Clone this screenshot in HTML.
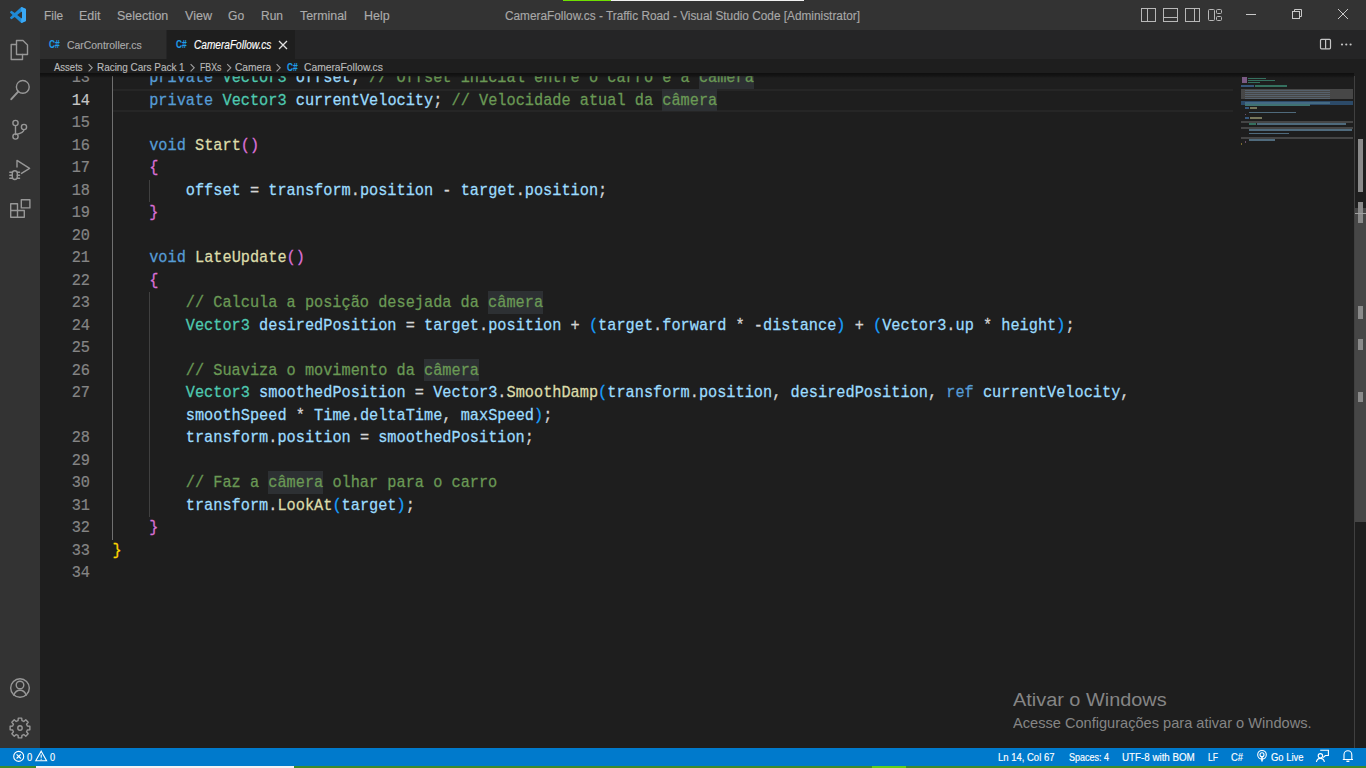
<!DOCTYPE html>
<html><head><meta charset="utf-8">
<style>
*{margin:0;padding:0;box-sizing:border-box}
html,body{width:1366px;height:768px;overflow:hidden;background:#1e1e1e;font-family:"Liberation Sans",sans-serif}
.abs{position:absolute}
.tx{position:absolute;white-space:pre;line-height:1;transform-origin:0 0;-webkit-text-stroke:0.15px currentColor}
svg{position:absolute;overflow:visible}
.ln{position:absolute;left:0;width:50px;text-align:right;font-family:"Liberation Mono",monospace;font-size:15.275px;line-height:22.5px;color:#858585;white-space:pre;transform:scaleY(1.1);transform-origin:0 15.3px;-webkit-text-stroke:0.2px currentColor}
.code{position:absolute;left:72.5px;font-family:"Liberation Mono",monospace;font-size:15.275px;line-height:22.5px;color:#d4d4d4;white-space:pre;transform:scaleY(1.08);transform-origin:0 15.3px;-webkit-text-stroke:0.25px currentColor}
.k{color:#569cd6}.t{color:#4ec9b0}.v{color:#9cdcfe}.f{color:#dcdcaa}.c{color:#6a9955}
.b1{color:#ffd700}.b2{color:#da70d6}.b3{color:#179fff}
.hl{background:#343a40}
</style></head><body>

<div class="abs" style="left:0;top:0;width:1366px;height:30px;background:#333333"></div>
<div class="abs" style="left:563px;top:0;width:48px;height:1px;background:#6fe000"></div>
<div class="abs" style="left:611px;top:0;width:193px;height:1px;background:#f0f0f0"></div>
<svg style="left:10px;top:7px" width="16" height="16" viewBox="0 0 100 100"><defs><clipPath id="lc"><rect x="70" y="0" width="30" height="100"/></clipPath></defs><path fill="#1f8ad6" d="M96.46 10.8L75.86.87a6.23 6.23 0 0 0-7.1 1.2L29.33 38.06 12.15 25a4.16 4.16 0 0 0-5.32.24L1.33 30.25a4.17 4.17 0 0 0 0 6.16L16.230 50 1.33 63.59a4.17 4.17 0 0 0 0 6.16l5.5 5a4.16 4.16 0 0 0 5.32.24l17.18-13.06 39.43 36a6.2 6.2 0 0 0 7.1 1.2l20.6-9.91A6.25 6.25 0 0 0 100 83.6V16.4a6.25 6.25 0 0 0-3.54-5.6zM75 72.7L45.08 50 75 27.3z"/><path fill="#3aa9f6" clip-path="url(#lc)" d="M96.46 10.8L75.86.87a6.23 6.23 0 0 0-7.1 1.2L29.33 38.06 12.15 25a4.16 4.16 0 0 0-5.32.24L1.33 30.25a4.17 4.17 0 0 0 0 6.16L16.230 50 1.33 63.59a4.17 4.17 0 0 0 0 6.16l5.5 5a4.16 4.16 0 0 0 5.32.24l17.18-13.06 39.43 36a6.2 6.2 0 0 0 7.1 1.2l20.6-9.91A6.25 6.25 0 0 0 100 83.6V16.4a6.25 6.25 0 0 0-3.54-5.6zM75 72.7L45.08 50 75 27.3z"/></svg>
<div class="tx" style="left:43.50px;top:9.92px;font-size:12.85px;color:#ababab;transform:scaleX(0.9233);">File</div>
<div class="tx" style="left:78.90px;top:9.92px;font-size:12.85px;color:#ababab;transform:scaleX(0.9700);">Edit</div>
<div class="tx" style="left:116.50px;top:9.92px;font-size:12.85px;color:#ababab;transform:scaleX(0.9702);">Selection</div>
<div class="tx" style="left:184.60px;top:9.92px;font-size:12.85px;color:#ababab;transform:scaleX(0.9810);">View</div>
<div class="tx" style="left:228.00px;top:9.92px;font-size:12.85px;color:#ababab;transform:scaleX(0.9444);">Go</div>
<div class="tx" style="left:261.00px;top:9.92px;font-size:12.85px;color:#ababab;transform:scaleX(0.9331);">Run</div>
<div class="tx" style="left:299.80px;top:9.92px;font-size:12.85px;color:#ababab;transform:scaleX(0.9636);">Terminal</div>
<div class="tx" style="left:364.20px;top:9.92px;font-size:12.85px;color:#ababab;transform:scaleX(0.9695);">Help</div>
<div class="tx" style="left:505.40px;top:9.92px;font-size:12.85px;color:#a8a8a8;transform:scaleX(0.9203);">CameraFollow.cs - Traffic Road - Visual Studio Code [Administrator]</div>
<svg style="left:0;top:0" width="1366" height="30"><g fill="none" stroke="#b8b8b8" stroke-width="1"><rect x="1141.5" y="8.5" width="14" height="13"/><line x1="1147.5" y1="8.5" x2="1147.5" y2="21.5"/><rect x="1163.5" y="8.5" width="14" height="13"/><line x1="1163.5" y1="17.5" x2="1177.5" y2="17.5"/><rect x="1185.5" y="8.5" width="14" height="13"/><line x1="1194.5" y1="8.5" x2="1194.5" y2="21.5"/><rect x="1208.5" y="9.5" width="6" height="11" rx="1"/><rect x="1216.5" y="9.5" width="5" height="4" rx="1"/><rect x="1216.5" y="16.5" width="5" height="4" rx="1"/></g><g fill="none" stroke="#c8c8c8" stroke-width="1"><line x1="1246" y1="14.5" x2="1256" y2="14.5"/><rect x="1292.5" y="11.5" width="7" height="7"/><path d="M1294.5 11.5V9.5h7v7h-2"/><path d="M1338 9L1348 19M1348 9L1338 19"/></g></svg>
<div class="abs" style="left:0;top:30px;width:40px;height:718px;background:#333333"></div>
<svg style="left:0;top:30px" width="40" height="718"><g fill="none" stroke="#979797" stroke-width="1.4" stroke-linejoin="round" stroke-linecap="round"><path d="M16.5 10.5h6.5l4.5 4.5v9.5h-11z"/><path d="M16.5 14.5h-5.3v15h11.3v-5"/><circle cx="22.8" cy="56.9" r="6.4"/><path d="M18.2 61.6L11.3 69.2" stroke-width="2"/><circle cx="15.5" cy="93" r="2.6"/><circle cx="24" cy="97" r="2.6"/><circle cx="15.5" cy="106.5" r="2.6"/><path d="M15.5 95.6v8.3M24 99.6c0 3-3 4-8.5 5"/><path d="M17 137V130.4L29.6 138.4L21.5 143.4"/><path d="M12.3 143.2c0-1.6 1.1-2.4 2.5-2.4s2.5.8 2.5 2.4v3.6c0 1.7-1.1 2.7-2.5 2.7s-2.5-1-2.5-2.7z"/><path d="M9.8 142.2h2.5M17.3 142.2h2.3M9.8 145.2h2.5M17.3 145.2h2.3M9.8 148.2h2.5M17.3 148.2h2.3"/><path d="M10.7 173.7h6.8v6.8h-6.8z M10.7 180.5h6.8v6.8h-6.8z M17.5 180.5h6.8v6.8h-6.8z"/><rect x="21.3" y="169.7" width="8.6" height="8.2"/><circle cx="20" cy="658" r="9.3"/><circle cx="20" cy="655" r="3.8"/><path d="M13.8 665.2c1.2-3.5 3.5-5 6.2-5s5 1.5 6.2 5"/></g><g transform="translate(20,698)" fill="none" stroke="#979797" stroke-width="1.4" stroke-linejoin="round"><path d="M-1.95,-7.34 L-1.69,-9.86 L1.69,-9.86 L1.95,-7.34 L3.81,-6.57 L5.77,-8.17 L8.17,-5.77 L6.57,-3.81 L7.34,-1.95 L9.86,-1.69 L9.86,1.69 L7.34,1.95 L6.57,3.81 L8.17,5.77 L5.77,8.17 L3.81,6.57 L1.95,7.34 L1.69,9.86 L-1.69,9.86 L-1.95,7.34 L-3.81,6.57 L-5.77,8.17 L-8.17,5.77 L-6.57,3.81 L-7.34,1.95 L-9.86,1.69 L-9.86,-1.69 L-7.34,-1.95 L-6.57,-3.81 L-8.17,-5.77 L-5.77,-8.17 L-3.81,-6.57 Z"/><circle cx="0" cy="0" r="2.2"/></g></svg>
<div class="abs" style="left:40px;top:30px;width:1326px;height:29px;background:#252526"></div>
<div class="abs" style="left:40px;top:30px;width:126px;height:29px;background:#2d2d2d"></div>
<div class="abs" style="left:167px;top:30px;width:128px;height:29px;background:#1e1e1e"></div>
<div class="tx" style="left:49.00px;top:39.95px;font-size:10.34px;color:#1f9de8;font-weight:bold;transform:scaleX(0.8013);">C#</div>
<div class="tx" style="left:67.30px;top:39.47px;font-size:11.73px;color:#ababab;transform:scaleX(0.8892);">CarController.cs</div>
<div class="tx" style="left:175.90px;top:39.95px;font-size:10.34px;color:#1f9de8;font-weight:bold;transform:scaleX(0.8013);">C#</div>
<div class="tx" style="left:194.00px;top:39.13px;font-size:12.01px;color:#ffffff;font-style:italic;transform:scaleX(0.8412);">CameraFollow.cs</div>
<svg style="left:0;top:0" width="1366" height="60"><g fill="none" stroke="#e0e0e0" stroke-width="1.3"><path d="M279 41L287 49M287 41L279 49"/></g><g fill="none" stroke="#c5c5c5" stroke-width="1.2"><rect x="1320.5" y="39.4" width="10" height="9.4" rx="1"/><line x1="1325.6" y1="39.4" x2="1325.6" y2="48.8"/></g><g fill="#c5c5c5"><circle cx="1342" cy="44.5" r="1.1"/><circle cx="1346.3" cy="44.5" r="1.1"/><circle cx="1350.6" cy="44.5" r="1.1"/></g></svg>
<div class="abs" style="left:40px;top:59px;width:1326px;height:17px;background:#1e1e1e"></div>
<div class="tx" style="left:54.20px;top:62.41px;font-size:11.45px;color:#bababa;transform:scaleX(0.8324);">Assets</div>
<div class="tx" style="left:97.20px;top:62.41px;font-size:11.45px;color:#bababa;transform:scaleX(0.8667);">Racing Cars Pack 1</div>
<div class="tx" style="left:199.80px;top:62.41px;font-size:11.45px;color:#bababa;transform:scaleX(0.7642);">FBXs</div>
<div class="tx" style="left:235.00px;top:62.41px;font-size:11.45px;color:#bababa;transform:scaleX(0.8903);">Camera</div>
<div class="tx" style="left:303.60px;top:62.41px;font-size:11.45px;color:#bababa;transform:scaleX(0.8994);">CameraFollow.cs</div>
<svg style="left:0;top:59px" width="400" height="17"><g fill="none" stroke="#a0a0a0" stroke-width="1.1"><path d="M88.6 5.2l3.6 3.6-3.6 3.6"/><path d="M190.6 5.2l3.6 3.6-3.6 3.6"/><path d="M227.2 5.2l3.6 3.6-3.6 3.6"/><path d="M276.6 5.2l3.6 3.6-3.6 3.6"/></g></svg>
<div class="tx" style="left:286.60px;top:63.15px;font-size:10.34px;color:#1f9de8;font-weight:bold;transform:scaleX(0.8013);">C#</div>
<div class="abs" style="left:40px;top:76px;width:1326px;height:672px;background:#1e1e1e;overflow:hidden">
<div class="abs" style="left:73px;top:12.5px;width:1120px;height:23px;border-top:2px solid #262626;border-bottom:2px solid #262626"></div>
<div class="abs" style="left:72px;top:0;width:1px;height:463.5px;background:#707070"></div>
<div class="abs" style="left:108.6px;top:103.5px;width:1px;height:22.5px;background:#404040"></div>
<div class="abs" style="left:108.6px;top:216.0px;width:1px;height:225.0px;background:#404040"></div>
<div class="abs" style="left:659.06px;top:-10.0px;width:54.99px;height:22.5px;background:#2d3033"></div>
<div class="ln" style="top:-9.0px;color:#858585">13</div>
<div class="code" style="top:-9.0px">    <span class="k">private</span> <span class="t">Vector3</span> <span class="v">offset</span>; <span class="c">// Offset inicial entre o carro e a </span><span class="c">câmera</span></div>
<div class="abs" style="left:622.40px;top:12.5px;width:54.99px;height:22.5px;background:#2d3033"></div>
<div class="ln" style="top:13.5px;color:#c6c6c6">14</div>
<div class="code" style="top:13.5px">    <span class="k">private</span> <span class="t">Vector3</span> <span class="v">currentVelocity</span>; <span class="c">// Velocidade atual da </span><span class="c">câmera</span></div>
<div class="ln" style="top:36.0px;color:#858585">15</div>
<div class="ln" style="top:58.5px;color:#858585">16</div>
<div class="code" style="top:58.5px">    <span class="k">void</span> <span class="f">Start</span><span class="b2">()</span></div>
<div class="ln" style="top:81.0px;color:#858585">17</div>
<div class="code" style="top:81.0px">    <span class="b2">{</span></div>
<div class="ln" style="top:103.5px;color:#858585">18</div>
<div class="code" style="top:103.5px">        <span class="v">offset</span> = <span class="v">transform</span>.<span class="v">position</span> - <span class="v">target</span>.<span class="v">position</span>;</div>
<div class="ln" style="top:126.0px;color:#858585">19</div>
<div class="code" style="top:126.0px">    <span class="b2">}</span></div>
<div class="ln" style="top:148.5px;color:#858585">20</div>
<div class="ln" style="top:171.0px;color:#858585">21</div>
<div class="code" style="top:171.0px">    <span class="k">void</span> <span class="f">LateUpdate</span><span class="b2">()</span></div>
<div class="ln" style="top:193.5px;color:#858585">22</div>
<div class="code" style="top:193.5px">    <span class="b2">{</span></div>
<div class="abs" style="left:448.26px;top:215.0px;width:54.99px;height:22.5px;background:#2d3033"></div>
<div class="ln" style="top:216.0px;color:#858585">23</div>
<div class="code" style="top:216.0px">        <span class="c">// Calcula a posição desejada da </span><span class="c">câmera</span></div>
<div class="ln" style="top:238.5px;color:#858585">24</div>
<div class="code" style="top:238.5px">        <span class="t">Vector3</span> <span class="v">desiredPosition</span> = <span class="v">target</span>.<span class="v">position</span> + <span class="b3">(</span><span class="v">target</span>.<span class="v">forward</span> * -<span class="v">distance</span><span class="b3">)</span> + <span class="b3">(</span><span class="v">Vector3</span>.<span class="v">up</span> * <span class="v">height</span><span class="b3">)</span>;</div>
<div class="ln" style="top:261.0px;color:#858585">25</div>
<div class="abs" style="left:384.11px;top:282.5px;width:54.99px;height:22.5px;background:#2d3033"></div>
<div class="ln" style="top:283.5px;color:#858585">26</div>
<div class="code" style="top:283.5px">        <span class="c">// Suaviza o movimento da </span><span class="c">câmera</span></div>
<div class="ln" style="top:306.0px;color:#858585">27</div>
<div class="code" style="top:306.0px">        <span class="t">Vector3</span> <span class="v">smoothedPosition</span> = <span class="v">Vector3</span>.<span class="f">SmoothDamp</span><span class="b3">(</span><span class="v">transform</span>.<span class="v">position</span>, <span class="v">desiredPosition</span>, <span class="k">ref</span> <span class="v">currentVelocity</span>,</div>
<div class="code" style="top:328.5px">        <span class="v">smoothSpeed</span> * <span class="v">Time</span>.<span class="v">deltaTime</span>, <span class="v">maxSpeed</span><span class="b3">)</span>;</div>
<div class="ln" style="top:351.0px;color:#858585">28</div>
<div class="code" style="top:351.0px">        <span class="v">transform</span>.<span class="v">position</span> = <span class="v">smoothedPosition</span>;</div>
<div class="ln" style="top:373.5px;color:#858585">29</div>
<div class="abs" style="left:228.30px;top:395.0px;width:54.99px;height:22.5px;background:#2d3033"></div>
<div class="ln" style="top:396.0px;color:#858585">30</div>
<div class="code" style="top:396.0px">        <span class="c">// Faz a </span><span class="c">câmera</span><span class="c"> olhar para o carro</span></div>
<div class="ln" style="top:418.5px;color:#858585">31</div>
<div class="code" style="top:418.5px">        <span class="v">transform</span>.<span class="f">LookAt</span><span class="b3">(</span><span class="v">target</span><span class="b3">)</span>;</div>
<div class="ln" style="top:441.0px;color:#858585">32</div>
<div class="code" style="top:441.0px">    <span class="b2">}</span></div>
<div class="ln" style="top:463.5px;color:#858585">33</div>
<div class="code" style="top:463.5px"><span class="b1">}</span></div>
<div class="ln" style="top:486.0px;color:#858585">34</div>
</div>
<div class="abs" style="left:40px;top:73px;width:1314px;height:5px;background:linear-gradient(rgba(0,0,0,0.5),rgba(0,0,0,0.3) 60%,rgba(0,0,0,0))"></div>
<div class="abs" style="left:1241px;top:88.7px;width:112px;height:10.3px;background:#474747"></div>
<div class="abs" style="left:1241px;top:101.4px;width:112px;height:3.8px;background:#2c4a68"></div>
<div class="abs" style="left:1241px;top:121.2px;width:112px;height:1.6px;background:#454545"></div>
<div class="abs" style="left:1241px;top:127.0px;width:112px;height:1.6px;background:#454545"></div>
<div class="abs" style="left:1241px;top:137.0px;width:112px;height:1.6px;background:#454545"></div>
<div class="abs" style="left:1241.5px;top:77px;width:5.5px;height:6px;background:#7a5a84"></div>
<div class="abs" style="left:1248px;top:77.5px;width:18px;height:1.7px;background:#35705f"></div>
<div class="abs" style="left:1248px;top:79.5px;width:27px;height:1.7px;background:#35705f"></div>
<div class="abs" style="left:1248px;top:81.5px;width:12px;height:1.7px;background:#35705f"></div>
<div class="abs" style="left:1241px;top:85.3px;width:13px;height:1.7px;background:#37587c"></div>
<div class="abs" style="left:1255px;top:85.3px;width:32px;height:1.7px;background:#35705f"></div>
<div class="abs" style="left:1245px;top:89.5px;width:85px;height:1.2px;background:#56616c"></div>
<div class="abs" style="left:1245px;top:91.5px;width:85px;height:1.2px;background:#56616c"></div>
<div class="abs" style="left:1245px;top:93.5px;width:85px;height:1.2px;background:#56616c"></div>
<div class="abs" style="left:1245px;top:95.5px;width:85px;height:1.2px;background:#56616c"></div>
<div class="abs" style="left:1245px;top:97.5px;width:85px;height:1.2px;background:#56616c"></div>
<div class="abs" style="left:1245px;top:102px;width:85px;height:1.7px;background:#446a84"></div>
<div class="abs" style="left:1245px;top:104px;width:65px;height:1.7px;background:#3f7272"></div>
<div class="abs" style="left:1245px;top:107.2px;width:4px;height:1.7px;background:#37587c"></div>
<div class="abs" style="left:1250px;top:107.2px;width:7px;height:1.7px;background:#77775c"></div>
<div class="abs" style="left:1249px;top:111.5px;width:47px;height:1.7px;background:#4f6a7c"></div>
<div class="abs" style="left:1245px;top:113.5px;width:1px;height:1.7px;background:#6a4f6a"></div>
<div class="abs" style="left:1245px;top:117.2px;width:4px;height:1.7px;background:#37587c"></div>
<div class="abs" style="left:1250px;top:117.2px;width:12px;height:1.7px;background:#77775c"></div>
<div class="abs" style="left:1249px;top:123.3px;width:7px;height:1.7px;background:#35705f"></div>
<div class="abs" style="left:1257px;top:123.3px;width:89px;height:1.7px;background:#4f6a7c"></div>
<div class="abs" style="left:1249px;top:129.0px;width:103px;height:1.7px;background:#4f6a7c"></div>
<div class="abs" style="left:1249px;top:132.8px;width:40px;height:1.7px;background:#4f6a7c"></div>
<div class="abs" style="left:1249px;top:138.9px;width:26px;height:1.7px;background:#4f6a7c"></div>
<div class="abs" style="left:1245px;top:141px;width:1px;height:1.7px;background:#6a4f6a"></div>
<div class="abs" style="left:1241px;top:143px;width:1px;height:1.7px;background:#7a6a30"></div>
<div class="abs" style="left:1354px;top:76px;width:12px;height:672px;background:#1e1e1e"></div>
<div class="abs" style="left:1354px;top:208px;width:12px;height:314px;background:#464646"></div>
<div class="abs" style="left:1354px;top:76px;width:1px;height:672px;background:#404040"></div>
<div class="abs" style="left:1358px;top:139px;width:5px;height:53px;background:#8a8a8a"></div>
<div class="abs" style="left:1358px;top:201.6px;width:5px;height:21.400000000000006px;background:#8a8a8a"></div>
<div class="abs" style="left:1358px;top:306.4px;width:5px;height:12.5px;background:#8a8a8a"></div>
<div class="abs" style="left:1358px;top:339.2px;width:5px;height:11.0px;background:#8a8a8a"></div>
<div class="abs" style="left:1358px;top:391.6px;width:5px;height:10.899999999999977px;background:#8a8a8a"></div>
<div class="abs" style="left:1355px;top:212.5px;width:11px;height:1px;background:#a0a0a0"></div>
<div class="tx" style="left:1012.90px;top:691.48px;font-size:18.58px;color:#858585;transform:scaleX(1.0704);-webkit-text-stroke:0">Ativar o Windows</div>
<div class="tx" style="left:1012.90px;top:716.07px;font-size:14.80px;color:#858585;transform:scaleX(0.9864);-webkit-text-stroke:0">Acesse Configurações para ativar o Windows.</div>
<div class="abs" style="left:0;top:748px;width:1366px;height:18px;background:#007acc"></div>
<div class="abs" style="left:0;top:766px;width:1366px;height:2px;background:#3d8b2a"></div>
<div class="abs" style="left:36px;top:766px;width:258px;height:2px;background:#f2f2f2"></div>
<div class="abs" style="left:872px;top:766px;width:34px;height:2px;background:#62d01a"></div>
<div class="tx" style="left:27.00px;top:752.63px;font-size:10.47px;color:#ffffff;transform:scaleX(0.8945);">0</div>
<div class="tx" style="left:49.80px;top:752.63px;font-size:10.47px;color:#ffffff;transform:scaleX(0.8773);">0</div>
<div class="tx" style="left:998.00px;top:752.63px;font-size:10.47px;color:#ffffff;transform:scaleX(0.9065);">Ln 14, Col 67</div>
<div class="tx" style="left:1068.50px;top:752.63px;font-size:10.47px;color:#ffffff;transform:scaleX(0.8612);">Spaces: 4</div>
<div class="tx" style="left:1122.00px;top:752.63px;font-size:10.47px;color:#ffffff;transform:scaleX(0.9335);">UTF-8 with BOM</div>
<div class="tx" style="left:1208.00px;top:752.63px;font-size:10.47px;color:#ffffff;transform:scaleX(0.8195);">LF</div>
<div class="tx" style="left:1231.00px;top:752.63px;font-size:10.47px;color:#ffffff;transform:scaleX(0.8950);">C#</div>
<div class="tx" style="left:1270.50px;top:752.63px;font-size:10.47px;color:#ffffff;transform:scaleX(0.9006);">Go Live</div>
<svg style="left:0;top:748px" width="1366" height="18"><g fill="none" stroke="#fff" stroke-width="1.1"><circle cx="18.7" cy="8.4" r="5"/><path d="M16.6 6.3l4.2 4.2M20.8 6.3l-4.2 4.2"/><path d="M41.2 3.2L46.6 12.8H35.8Z"/><path d="M41.2 6.5v3.3M41.2 10.8v.9"/><g transform="translate(0,-748)"><circle cx="1262" cy="754.8" r="4.3"/><circle cx="1262" cy="754.8" r="2"/><path d="M1262 756v5.6" stroke-width="1.6"/><path d="M1320.2 750.3h8.2v5.2h-3l-2.2 2"/><circle cx="1320.4" cy="755.8" r="2.2"/><path d="M1316.4 762c.5-2.4 2-3.6 4-3.6s3.5 1.2 4 3.6"/><path d="M1344 759.5v-4.8a3.9 3.9 0 0 1 7.8 0v4.8zM1342.8 759.5h10.2"/><path d="M1346.4 761.3h3" stroke-width="1.4"/></g></g></svg>
</body></html>
